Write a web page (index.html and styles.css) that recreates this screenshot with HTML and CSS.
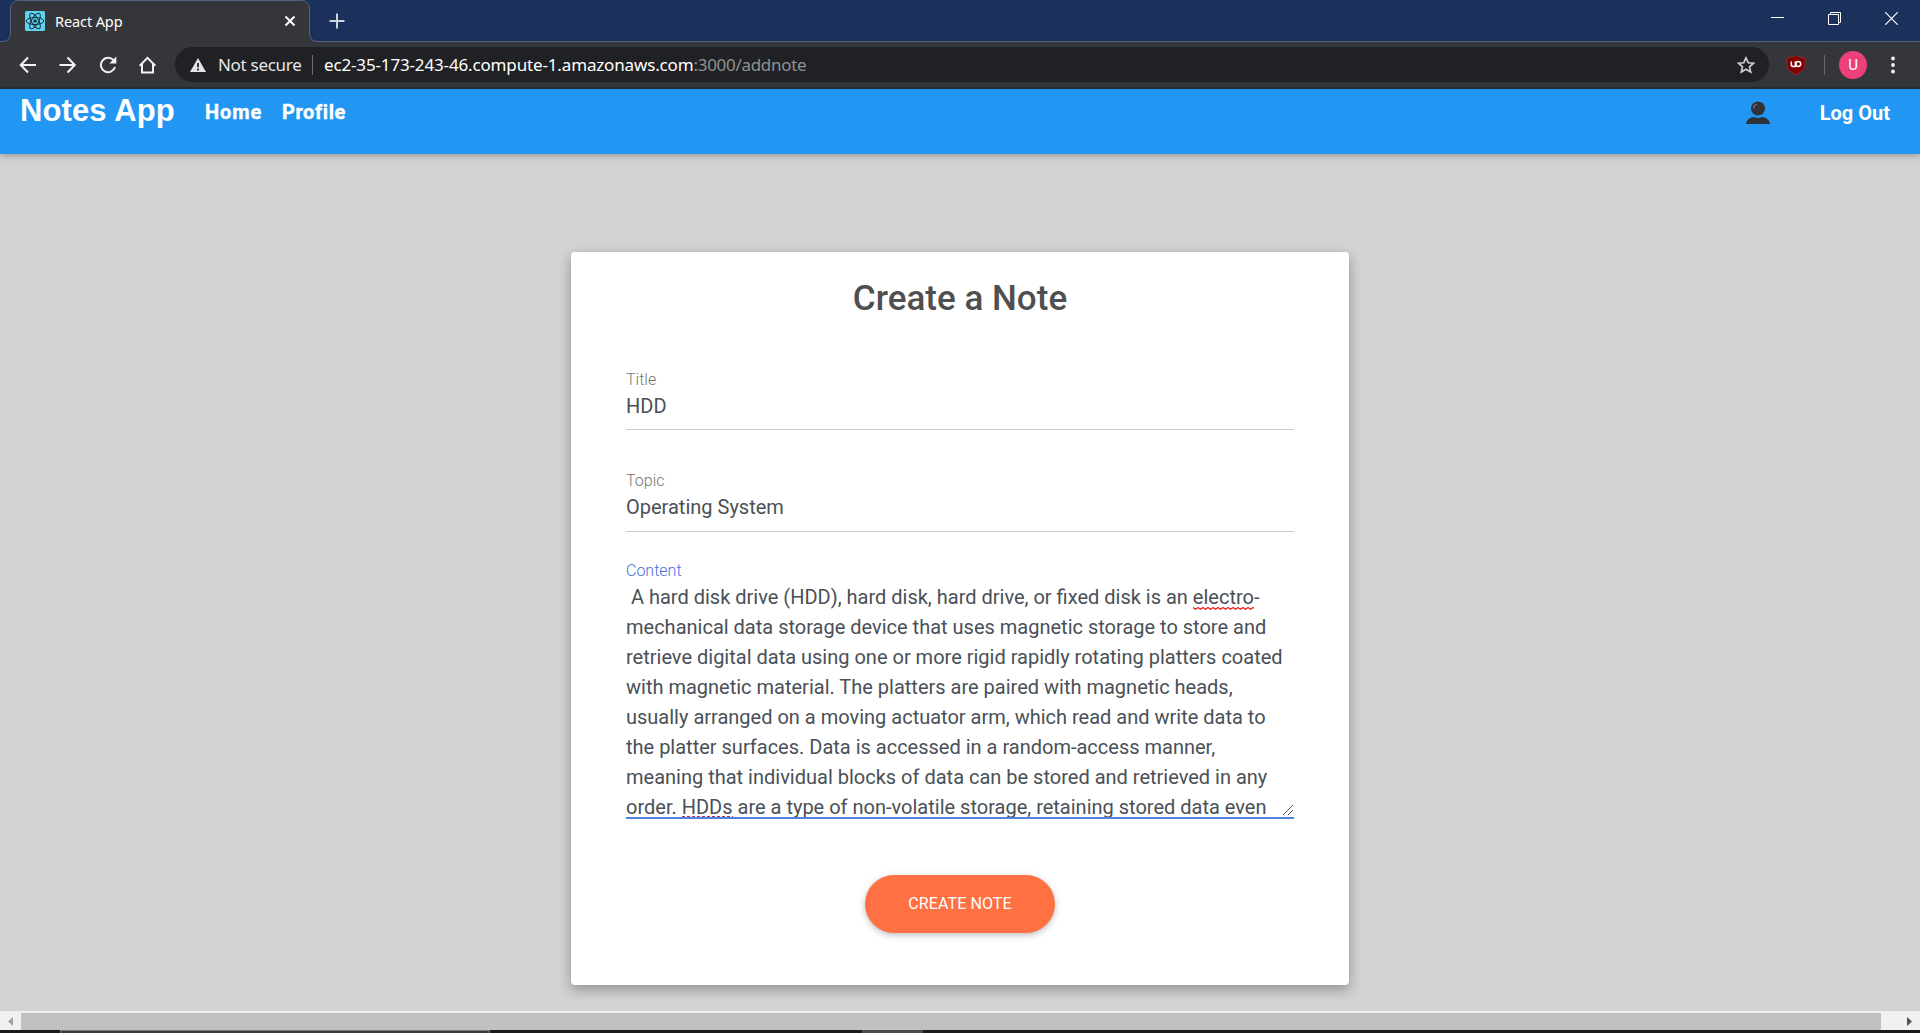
FILE: index.html
```html
<!DOCTYPE html>
<html lang="en">
<head>
<meta charset="utf-8">
<title>React App</title>
<link rel="stylesheet" href="styles.css">
</head>
<body>
<div class="window">
  <div class="tabstrip">
    <svg class="tab-shape" width="322" height="42" viewBox="0 0 322 42"><path d="M0 42V41.5H2Q10.500 41.500 10.500 33V9Q10.500 .5 19 .5H301Q309.500 .5 309.500 9V33Q309.500 41.500 318 41.500H322V42Z" fill="#35363a"/><path d="M0 41.500H2Q10.500 41.500 10.500 33V9Q10.500 .5 19 .5H301Q309.500 .5 309.500 9V33Q309.500 41.500 318 41.500H322" fill="none" stroke="#54637d"/></svg>
    <div class="tab">
      <svg class="favicon" width="20" height="20" viewBox="0 0 20 20"><rect width="20" height="20" rx="1.500" fill="#61d3f2"/><g fill="none" stroke="#15303c" stroke-width="1"><ellipse cx="10" cy="10" rx="8.800" ry="3.500"/><ellipse cx="10" cy="10" rx="8.800" ry="3.500" transform="rotate(60 10 10)"/><ellipse cx="10" cy="10" rx="8.800" ry="3.500" transform="rotate(120 10 10)"/></g><circle cx="10" cy="10" r="1.800" fill="#15303c"/></svg>
      <span class="tab-title">React App</span>
      <svg class="tab-close" width="12" height="12" viewBox="0 0 12 12"><path d="M1.500 1.500L10.500 10.500M10.500 1.500L1.500 10.500" stroke="#fff" stroke-width="2"/></svg>
    </div>
    <svg class="new-tab" width="16" height="16" viewBox="0 0 16 16"><path d="M8 .5V15.500M.5 8H15.500" stroke="#d0d5dd" stroke-width="2"/></svg>
    <div class="window-controls">
      <svg width="13" height="13" viewBox="0 0 13 13"><path d="M0 5.500H13" stroke="#fff"/></svg>
      <svg width="13" height="13" viewBox="0 0 13 13"><path d="M.5 2.500H10.500V12.500H.5ZM2.500 2.500V.5H12.500V10.500H10.500" fill="none" stroke="#fff"/></svg>
      <svg width="13" height="13" viewBox="0 0 13 13"><path d="M.3 .3L12.700 12.700M12.700 .3L.3 12.700" stroke="#fff" stroke-width="1.200"/></svg>
    </div>
  </div>
  <div class="toolbar">
    <div class="nav-buttons">
      <svg width="18" height="18" viewBox="0 0 18 18"><path d="M17 9H2M9 1.500L1.700 9L9 16.500" fill="none" stroke="#f1f3f4" stroke-width="2"/></svg>
      <svg width="18" height="18" viewBox="0 0 18 18"><path d="M.5 9H15.500M8.500 1.500L15.800 9L8.500 16.500" fill="none" stroke="#f1f3f4" stroke-width="2"/></svg>
      <svg width="18" height="18" viewBox="0 0 18 18"><path d="M14.500 4.200A7.200 7.200 0 1 0 16 11" fill="none" stroke="#f1f3f4" stroke-width="2"/><path d="M17.300 .5V7.500H10.300Z" fill="#f1f3f4"/></svg>
      <svg width="18" height="18" viewBox="0 0 18 18"><path d="M.7 9.700L8.500 1.800L16.300 9.700M3 8V16.500H14V8" fill="none" stroke="#f1f3f4" stroke-width="2"/></svg>
    </div>
    <div class="address">
      <svg class="warning" width="16" height="14" viewBox="0 0 16 14"><path d="M8 0L16 14H0Z" fill="#e3e4e6"/><path d="M8 5V9.300M8 10.600V12.400" stroke="#202124" stroke-width="1.700"/></svg>
      <span class="secure">Not secure</span>
      <span class="address-sep"></span>
      <span class="url"><span class="host">ec2-35-173-243-46.compute-1.amazonaws.com</span><span class="path">:3000/addnote</span></span>
      <svg class="star" width="18" height="18" viewBox="0 0 18 18"><path d="M9 1.800L11.200 6.700L16.500 7.200L12.500 10.800L13.700 16L9 13.200L4.300 16L5.500 10.800L1.500 7.200L6.800 6.700Z" fill="none" stroke="#d0d1d3" stroke-width="1.600"/></svg>
    </div>
    <svg class="shield" width="20" height="20" viewBox="0 0 20 20"><path d="M10 .5Q14 3 19 3V10Q18.500 16 10 19.500Q1.500 16 1 10V3Q6 3 10 .5Z" fill="#800000" stroke="#a32d2d" stroke-width=".7"/><path d="M5.300 6.500V9.600Q5.300 11.500 7.200 11.500H9.300V6.500" fill="none" stroke="#fff" stroke-width="1.500"/><circle cx="12.300" cy="9" r="2.400" fill="none" stroke="#fff" stroke-width="1.500"/></svg>
    <span class="toolbar-sep"></span>
    <span class="avatar">U</span>
    <svg class="menu" width="4" height="18" viewBox="0 0 4 18"><g fill="#f1f3f4"><circle cx="2" cy="2.500" r="1.900"/><circle cx="2" cy="9" r="1.900"/><circle cx="2" cy="15.500" r="1.900"/></g></svg>
  </div>
  <nav class="navbar">
    <span class="brand">Notes App</span>
    <span class="link strong home">Home</span>
    <span class="link strong">Profile</span>
    <svg class="user" width="24" height="24" viewBox="0 0 24 24"><circle cx="12" cy="7.500" r="7" fill="#303235"/><path d="M0 23V22.500Q2 16 8 16Q12 17.800 16 16Q22 16 24 22.500V23Z" fill="#303235"/><path d="M7.700 7.500Q7.700 4.300 11 3.300" fill="none" stroke="#77818a" stroke-width="1.200"/></svg>
    <span class="link logout">Log Out</span>
  </nav>
  <main class="page">
    <form class="card">
      <h2 class="heading">Create a Note</h2>
      <div class="field title">
        <label class="label">Title</label>
        <div class="value">HDD</div>
      </div>
      <div class="field topic">
        <label class="label">Topic</label>
        <div class="value">Operating System</div>
      </div>
      <div class="field content">
        <label class="label active">Content</label>
        <div class="textarea"><div> A hard disk drive (HDD), hard disk, hard drive, or fixed disk is an <span class="misspelt">electro<svg class="squiggle" width="61" height="3"><defs><pattern id="wave" width="5" height="3" patternUnits="userSpaceOnUse"><path d="M-1 .5L0 .5L2.500 2.300L5 .5L6 .5" fill="none" stroke="#f01818" stroke-width="1.200"/></pattern></defs><rect width="61" height="3" fill="url(#wave)"/></svg></span>-</div><div>mechanical data storage device that uses magnetic storage to store and</div><div>retrieve digital data using one or more rigid rapidly rotating platters coated</div><div>with magnetic material. The platters are paired with magnetic heads,</div><div>usually arranged on a moving actuator arm, which read and write data to</div><div>the platter surfaces. Data is accessed in a random-access manner,</div><div>meaning that individual blocks of data can be stored and retrieved in any</div><div>order. <span class="misspelt">HDDs<svg class="squiggle clipped" width="51" height="3"><path d="M0 .5H51" stroke="#b0306a" stroke-dasharray="3 2"/></svg></span> are a type of non-volatile storage, retaining stored data even</div>
          <svg class="resize" width="12" height="12" viewBox="0 0 12 12"><path d="M1 11L11 1M6 11L11 6" stroke="#555" stroke-width="1"/></svg>
        </div>
      </div>
      <button class="submit" type="button">CREATE NOTE</button>
    </form>
  </main>
  <div class="scrollbar">
    <span class="arrow"><svg width="5" height="9" viewBox="0 0 5 9"><path d="M5 0V9L0 4.500Z" fill="#a3a3a3"/></svg></span>
    <span class="thumb"></span>
    <span class="arrow right"><svg width="5" height="9" viewBox="0 0 5 9"><path d="M0 0V9L5 4.500Z" fill="#505050"/></svg></span>
  </div>
  <div class="taskbar"><span class="search"></span><span class="task"></span></div>
</div>
</body>
</html>
```
FILE: styles.css
```css
* { box-sizing: border-box; }
body { margin: 0; font-family: Roboto, "Liberation Sans", sans-serif; }
svg { display: block; flex: none; }
.window { width: 1920px; height: 1033px; display: flex; flex-direction: column; overflow: hidden; }

.tabstrip { height: 42px; flex: none; display: flex; align-items: flex-start; position: relative; background: #1b315c; border-bottom: 1px solid #54637d; font-family: "Noto Sans", "Open Sans", sans-serif; }
.tab-shape { position: absolute; left: 0; top: 0; }
.tab { width: 310px; height: 41px; padding: 0 14px 0 25px; display: flex; align-items: center; position: relative; }
.tab-title { margin-left: 10px; flex: 1; color: #fff; font-size: 14.500px; line-height: 20px; letter-spacing: -.1px; white-space: nowrap; }
.new-tab { margin: 13px 0 0 19px; position: relative; }
.window-controls { margin: 12px 22px 0 auto; display: flex; gap: 44px; }

.toolbar { height: 47px; flex: none; display: flex; align-items: center; background: #35363a; border-bottom: 2px solid #23303b; font-family: "Noto Sans", "Open Sans", sans-serif; }
.nav-buttons { padding-left: 19px; display: flex; gap: 22px; }
.address { margin-left: 18px; width: 1594px; height: 35px; border-radius: 18px; background: #202124; display: flex; align-items: center; font-size: 17px; white-space: nowrap; }
.warning { margin-left: 15px; }
.secure { margin-left: 12px; width: 94px; color: #e6e7e8; letter-spacing: -.3px; }
.address-sep { width: 1px; height: 20px; background: #6c6e71; }
.url { margin-left: 11px; flex: 1; color: #fff; letter-spacing: -.15px; }
.path { color: #8f9195; letter-spacing: -.3px; }
.star { margin-right: 14px; }
.shield { margin-left: 17px; }
.toolbar-sep { margin-left: 18px; width: 1px; height: 20px; background: #65666a; }
.avatar { margin-left: 14px; width: 28px; height: 28px; border-radius: 50%; background: #ec407a; color: #fff; font: 15px/28px Roboto, sans-serif; text-align: center; }
.menu { margin-left: 24px; }

.navbar { height: 65px; flex: none; display: flex; align-items: flex-start; position: relative; padding: 0 30px 0 20px; background: #2196f3; color: #fff; font-weight: 700; white-space: nowrap; box-shadow: 0 2px 5px rgba(0,0,0,.16), 0 2px 10px rgba(0,0,0,.12); }
.brand { width: 185px; font: 700 31px/43px "Liberation Sans", Arial, sans-serif; letter-spacing: .1px; }
.link { font-size: 20px; line-height: 46px; }
.strong { letter-spacing: .6px; -webkit-text-stroke: .4px #fff; }
.home { width: 77px; letter-spacing: .9px; }
.user { margin: 12px 50px 0 auto; }
.logout { line-height: 48px; }

.page { flex: 1; padding-top: 98px; background: #d3d3d3; }
.card { width: 778px; height: 733px; margin: 0 auto; padding: 24px 55px 0; border-radius: 4px; background: #fff; box-shadow: 0 5px 11px rgba(0,0,0,.18), 0 4px 15px rgba(0,0,0,.15); }
.heading { margin: 0; font-size: 35px; line-height: 45px; font-weight: 500; color: #4f4f4f; text-align: center; }
.title { margin-top: 47px; }
.topic { margin-top: 39px; }
.content { margin-top: 27px; }
.label { display: block; height: 23px; font-size: 16px; line-height: 24px; font-weight: 300; color: #757575; }
.active { color: #4a6fd8; }
.value { height: 40px; border-bottom: 1px solid #cccdce; font-size: 20px; line-height: 30px; color: #495057; }
.title .value { height: 39px; }
.textarea { position: relative; height: 237px; border-bottom: 2px solid #5182dc; overflow: hidden; white-space: pre; font-size: 20px; line-height: 30px; color: #495057; }
.misspelt { position: relative; }
.squiggle { position: absolute; left: 0; bottom: -1px; }
.clipped { bottom: 0; }
.resize { position: absolute; right: 0; bottom: 1px; }
.submit { display: block; width: 190px; height: 58px; margin: 56px auto 0; padding: 0; border: 0; border-radius: 29px; background: #ff7043; color: #fff; font: 400 16px/24px Roboto, sans-serif; letter-spacing: .1px; box-shadow: 0 2px 5px rgba(0,0,0,.16), 0 2px 10px rgba(0,0,0,.12); }

.scrollbar { height: 19px; flex: none; display: flex; padding-top: 2px; background: #f1f1f1; }
.arrow { width: 21px; display: flex; align-items: center; padding-left: 8px; }
.thumb { flex: 1; background: #c1c1c1; }
.right { width: 39px; padding-left: 26px; }
.taskbar { height: 3px; flex: none; display: flex; background: #1b1b1d; }
.search { margin-left: 60px; width: 430px; background: #3a3b3d; border: solid #77787a; border-width: 1px 1px 0; }
.task { margin-left: 372px; width: 61px; background: #4b4b4d; }
```
